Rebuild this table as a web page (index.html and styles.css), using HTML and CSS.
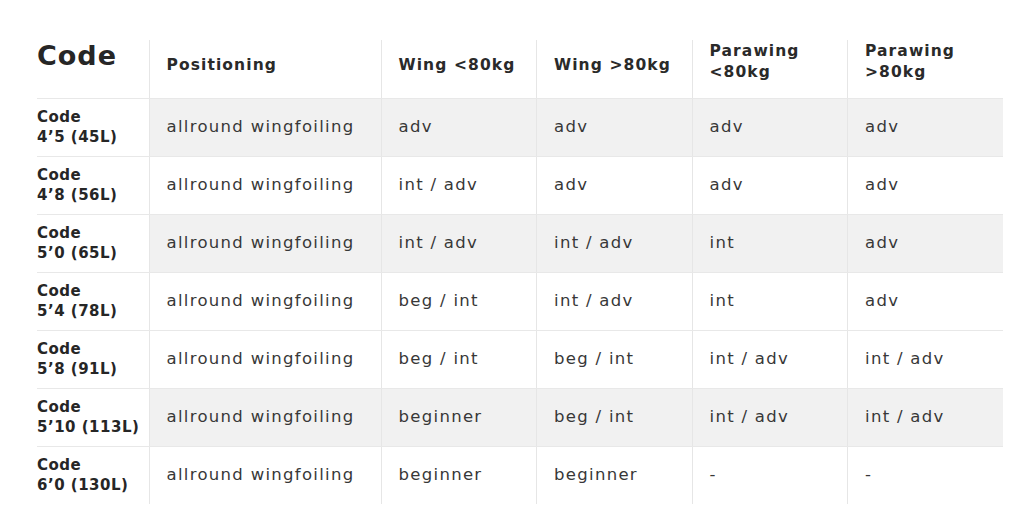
FILE: index.html
```html
<!DOCTYPE html>
<html lang="en">
<head>
<meta charset="utf-8">
<title>Code board sizes</title>
<link rel="stylesheet" href="styles.css">
</head>
<body>
<div class="wrap">
<table class="sizes">
  <colgroup>
    <col class="c-code"><col class="c-pos"><col class="c-w"><col class="c-w"><col class="c-w"><col class="c-w">
  </colgroup>
  <thead>
    <tr class="head">
      <th class="h-code">Code</th>
      <th class="h-one">Positioning</th>
      <th class="h-one">Wing &lt;80kg</th>
      <th class="h-one">Wing &gt;80kg</th>
      <th class="h-two">Parawing<br>&lt;80kg</th>
      <th class="h-two">Parawing<br>&gt;80kg</th>
    </tr>
  </thead>
  <tbody>
    <tr class="shade">
      <td class="code">Code<br>4’5 (45L)</td><td>allround wingfoiling</td><td>adv</td><td>adv</td><td>adv</td><td>adv</td>
    </tr>
    <tr>
      <td class="code">Code<br>4’8 (56L)</td><td>allround wingfoiling</td><td>int / adv</td><td>adv</td><td>adv</td><td>adv</td>
    </tr>
    <tr class="shade">
      <td class="code">Code<br>5’0 (65L)</td><td>allround wingfoiling</td><td>int / adv</td><td>int / adv</td><td>int</td><td>adv</td>
    </tr>
    <tr>
      <td class="code">Code<br>5’4 (78L)</td><td>allround wingfoiling</td><td>beg / int</td><td>int / adv</td><td>int</td><td>adv</td>
    </tr>
    <tr>
      <td class="code">Code<br>5’8 (91L)</td><td>allround wingfoiling</td><td>beg / int</td><td>beg / int</td><td>int / adv</td><td>int / adv</td>
    </tr>
    <tr class="shade">
      <td class="code">Code<br>5’10 (113L)</td><td>allround wingfoiling</td><td>beginner</td><td>beg / int</td><td>int / adv</td><td>int / adv</td>
    </tr>
    <tr class="last">
      <td class="code">Code<br>6’0 (130L)</td><td>allround wingfoiling</td><td>beginner</td><td>beginner</td><td>-</td><td>-</td>
    </tr>
  </tbody>
</table>
</div>
</body>
</html>
```

FILE: styles.css
```css
html, body {
  margin: 0;
  padding: 0;
  background: #ffffff;
}

.wrap {
  padding: 40px 0 0 37px;
}

.sizes {
  border-collapse: collapse;
  table-layout: fixed;
  width: 966px;
  font-family: "DejaVu Sans", "Liberation Sans", sans-serif;
  color: #383838;
}

.c-code { width: 112px; }
.c-pos { width: 232px; }
.c-w { width: 155.5px; }

.sizes tr {
  height: 58px;
}

.sizes th {
  padding: 0 0 0 17px;
  text-align: left;
  vertical-align: top;
  font-weight: bold;
  font-size: 15.5px;
  line-height: 21px;
  letter-spacing: 1.1px;
  color: #2a2a2a;
  border-left: 1px solid #e6e6e6;
  border-bottom: 1px solid #e8e8e8;
}

.sizes th.h-code {
  border-left: none;
  padding: 0;
  font-size: 27px;
  line-height: 32px;
  letter-spacing: 1px;
  color: #262626;
}

.sizes th.h-one {
  padding-top: 15px;
}

.sizes th.h-two {
  padding-top: 1px;
}

.sizes td {
  padding: 0 0 0 17px;
  vertical-align: middle;
  font-size: 16.5px;
  line-height: 20px;
  letter-spacing: 1.3px;
  border-left: 1px solid #e6e6e6;
  border-bottom: 1px solid #e8e8e8;
  white-space: nowrap;
}

.sizes td.code {
  border-left: none;
  padding: 0;
  font-weight: bold;
  font-size: 15px;
  line-height: 20px;
  letter-spacing: 0.5px;
  color: #262626;
  background: #ffffff;
}

.sizes tr.shade td {
  background: #f1f1f1;
}

.sizes tr.shade td.code {
  background: #ffffff;
}

.sizes tr.last td {
  border-bottom: none;
}
```
